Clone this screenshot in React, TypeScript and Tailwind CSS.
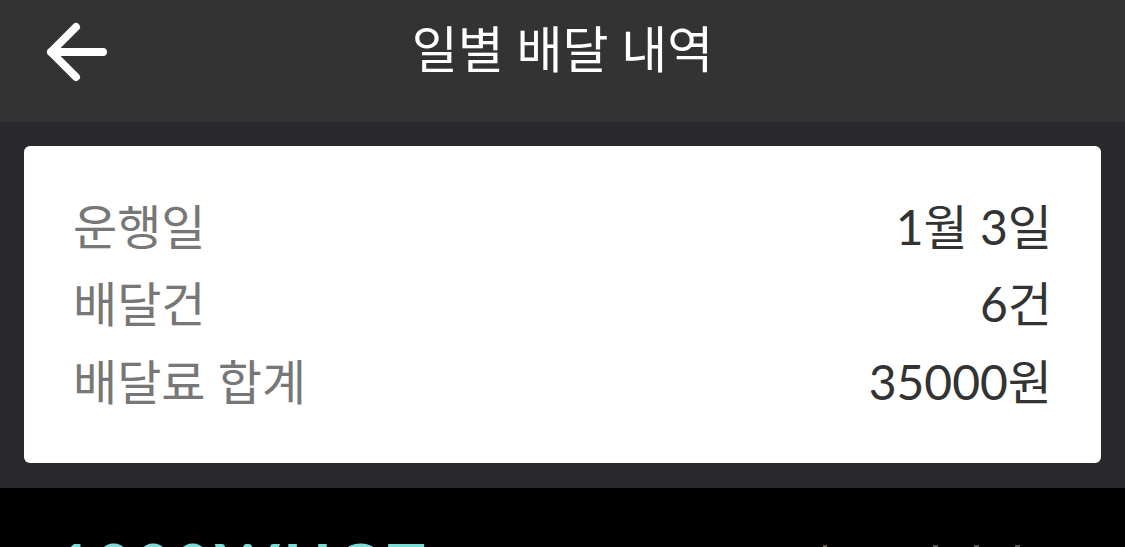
import React from "react";

export default function App() {
  const font = { fontFamily: 'Lato, "Noto Sans CJK KR", sans-serif' };
  const rows = [
    ["운행일", "1월 3일"],
    ["배달건", "6건"],
    ["배달료 합계", "35000원"],
  ];
  return (
    <div className="w-[1125px] h-[547px] overflow-hidden bg-black" style={font}>
      <div className="h-[122px] bg-[#333333] flex items-start pt-[14px] pl-[44px] pr-[108px]">
        <svg className="mt-[8px] shrink-0" width="64" height="62" viewBox="0 0 64 62" fill="none">
          <path d="M7 30 L32 5 M7 30 L32 55 M7 30 L59 30" stroke="white" strokeWidth="8" strokeLinecap="round" strokeLinejoin="round" />
        </svg>
        <div className="flex-1 text-center text-white text-[50px] leading-[70px]">일별 배달 내역</div>
      </div>
      <div className="bg-[#29282d] px-[24px] pt-[24px] pb-[25px]">
        <div className="bg-white rounded-[6px] px-[49px] py-[42px]">
          {rows.map(([l, v]) => (
            <div key={l} className="flex justify-between items-center h-[77.5px] text-[48px]">
              <span className="text-[#777777]">{l}</span>
              <span className="text-[#333333]">{v}</span>
            </div>
          ))}
        </div>
      </div>
      <div className="h-[59px] bg-black overflow-hidden flex items-start justify-between pl-[56px] pr-[105px] pt-[46px]">
        <div className="text-[#7adcd4] text-[63px] font-bold leading-none tracking-[3px]">1000WHOT</div>
        <div className="flex items-start gap-[36px] pt-[11px]">
          <div className="w-[4px] h-[3px] bg-[#6b5a40] mr-[70px]" />
          <div className="w-[5px] h-[3px] bg-[#555]" />
          <div className="w-[5px] h-[3px] bg-[#555]" />
          <div className="w-[5px] h-[3px] bg-[#555]" />
        </div>
      </div>
    </div>
  );
}
